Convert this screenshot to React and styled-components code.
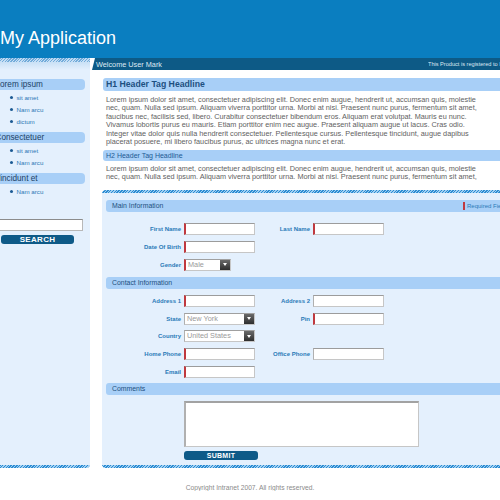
import React from 'react';
import styled, { createGlobalStyle } from 'styled-components';

const GlobalStyle = createGlobalStyle`
  body {
    margin: 0;
    background: #fff;
    overflow: hidden;
    font-family: "Liberation Sans", Arial, sans-serif;
  }
`;

const hatch = `repeating-linear-gradient(135deg, #2a8bd2 0 1px, #a2d0f2 1px 2px)`;

const Page = styled.div`
  width: 512px;
  margin-left: -6px;
`;

const Header = styled.header`
  height: 58px;
  box-sizing: border-box;
  background: #0a7ec0;
  display: flex;
  align-items: flex-end;
  padding: 0 0 11px 6px;
`;

const Title = styled.h1`
  margin: 0;
  font-size: 18px;
  line-height: 18px;
  font-weight: normal;
  color: #fff;
`;

const Body = styled.div`
  display: flex;
  align-items: stretch;
`;

const Sidebar = styled.aside`
  width: 96px;
  display: flex;
  flex-direction: column;
`;

const SideTop = styled.div`
  height: 12px;
  background:
    repeating-linear-gradient(135deg, rgba(30, 120, 190, 0.5) 0 1px, transparent 1px 2px) top / 100% 4px no-repeat,
    linear-gradient(#bcd9f2, #e4f0fd);
`;

const SideBox = styled.div`
  flex: 1;
  display: flex;
  flex-direction: column;
  background: #e4f0fd;
  border-bottom-right-radius: 4px;
  padding-top: 9px;
  overflow: hidden;

  &::after {
    content: '';
    display: block;
    height: 3px;
    margin-top: auto;
    background: ${hatch};
  }
`;

const SideHead = styled.div`
  height: 11px;
  line-height: 11px;
  margin-right: 5px;
  padding-left: 1.5px;
  background: #a8cff7;
  border-radius: 0 4px 4px 0;
  font-size: 8.2px;
  color: #1d3f66;
  white-space: nowrap;
`;

const SideList = styled.ul`
  list-style: none;
  margin: 0 0 5px;
  padding: 1px 0 0;
`;

const SideItem = styled.li`
  display: flex;
  align-items: center;
  height: 12px;
  padding-left: 16px;
  font-size: 6.2px;
  color: #2c77b5;

  &::before {
    content: '';
    width: 3px;
    height: 3px;
    border-radius: 50%;
    background: #1d5a94;
    margin-right: 3.5px;
  }
`;

const SearchInput = styled.input`
  display: block;
  box-sizing: border-box;
  width: 89px;
  height: 12px;
  margin: 17px 0 4px;
  padding: 0;
  background: #fff;
  border: 1px solid #b8b8b8;
  border-top-color: #8c8c8c;
`;

const Button = styled.button`
  display: block;
  box-sizing: border-box;
  width: ${p => p.$w}px;
  height: ${p => p.$h}px;
  margin-left: ${p => p.$ml || 0}px;
  padding: 0;
  border: none;
  border-radius: 3px;
  background: #0e5a88;
  color: #fff;
  font-family: "Liberation Sans", Arial, sans-serif;
  font-weight: bold;
  font-size: ${p => p.$fs}px;
  line-height: ${p => p.$h}px;
  letter-spacing: 0.3px;
`;

const Main = styled.main`
  flex: 1;
  min-width: 0;
  display: flex;
  flex-direction: column;
`;

const TopBar = styled.div`
  height: 12px;
  margin-left: 2px;
  background: #0d5a86;
  clip-path: polygon(3px 0, 100% 0, 100% 100%, 0 100%);
  display: flex;
  align-items: center;
  padding-left: 4px;
  font-size: 7.3px;
  color: #dde9f3;
  white-space: nowrap;
`;

const Registered = styled.span`
  margin-left: auto;
  width: 78px;
  overflow: hidden;
  font-size: 5.6px;
`;

const Content = styled.div`
  flex: 1;
  padding: 8px 0 0 13px;
  display: flex;
  flex-direction: column;
`;

const HeadBar = styled.div`
  height: ${p => p.$h}px;
  line-height: ${p => p.$h}px;
  padding-left: 3px;
  background: #a8cff7;
  border-radius: 3px 0 0 3px;
  font-size: ${p => p.$fs}px;
  font-weight: ${p => (p.$bold ? 'bold' : 'normal')};
  color: ${p => (p.$bold ? '#1d4f80' : '#1d5a94')};
`;

const Para = styled.p`
  margin: ${p => p.$mt}px 0 ${p => p.$mb}px 3px;
  font-size: 7.3px;
  line-height: 8.4px;
  color: #616161;

  span {
    display: block;
    white-space: nowrap;
  }
`;

const Panel = styled.form`
  margin-left: -1px;
  background: #e4f0fd;
  border-radius: 4px 0 0 4px;
  overflow: hidden;
  display: flex;
  flex-direction: column;

  &::before,
  &::after {
    content: '';
    display: block;
    height: 3px;
    background: ${hatch};
  }
`;

const PanelInner = styled.div`
  padding: 7px 0 5px 4px;
`;

const SectionBar = styled.div`
  display: flex;
  align-items: center;
  height: 12px;
  padding-left: 6px;
  margin-bottom: ${p => p.$mb}px;
  background: #a8cff7;
  border-radius: 3px 0 0 3px;
  font-size: 6.9px;
  color: #1d4f80;
  white-space: nowrap;
`;

const Required = styled.span`
  margin-left: auto;
  width: 43px;
  overflow: hidden;
  display: flex;
  align-items: center;
  font-size: 6px;
  color: #2a7ab8;

  &::before {
    content: '';
    flex: none;
    width: 2px;
    height: 8px;
    background: #c0393f;
    margin-right: 2px;
  }
`;

const Grid = styled.div`
  display: grid;
  grid-template-columns: 75px 71px 52px 71px;
  grid-auto-rows: 12px;
  column-gap: 3px;
  row-gap: ${p => p.$gap}px;
  margin-bottom: ${p => p.$mb}px;
`;

const Label = styled.label`
  text-align: right;
  line-height: 12px;
  font-size: 6px;
  font-weight: bold;
  color: #2a7ab8;
  white-space: nowrap;
`;

const Input = styled.input`
  box-sizing: border-box;
  width: 71px;
  height: 12px;
  margin: 0;
  padding: 0;
  background: #fff;
  border: 1px solid #c6c6c6;
  border-top-color: #9c9c9c;
  border-left: ${p => (p.$req ? '2px solid #c0393f' : '1px solid #b0b0b0')};
`;

const Select = styled.div`
  box-sizing: border-box;
  width: ${p => p.$w}px;
  height: 12px;
  display: flex;
  background: #fff;
  border: 1px solid #c6c6c6;
  border-top-color: #a0a0a0;
  border-left: ${p => (p.$req ? '2px solid #c0393f' : '1px solid #b0b0b0')};
  font-size: 7.3px;
  line-height: 10px;
  color: #9a9a9a;
  padding-left: 2px;
`;

const Arrow = styled.span`
  margin-left: auto;
  width: 10px;
  height: 10px;
  background: linear-gradient(#6a6a6a, #2e2e2e);
  display: flex;
  align-items: center;
  justify-content: center;

  &::after {
    content: '';
    border-left: 2.5px solid transparent;
    border-right: 2.5px solid transparent;
    border-top: 3px solid #fff;
  }
`;

const Comments = styled.textarea`
  display: block;
  box-sizing: border-box;
  width: 235px;
  height: 46px;
  margin: 6px 0 4px 78px;
  padding: 0;
  resize: none;
  background: #fff;
  border: 1px solid #c6c6c6;
  border-top: 2px solid #a2a2a2;
  border-left: 2px solid #b0b0b0;
`;

const Footer = styled.footer`
  padding-top: 16px;
  text-align: center;
  font-size: 6.7px;
  color: #8a8a8a;
`;

const para1 = [
  'Lorem ipsum dolor sit amet, consectetuer adipiscing elit. Donec enim augue, hendrerit ut, accumsan quis, molestie',
  'nec, quam. Nulla sed ipsum. Aliquam viverra porttitor urna. Morbi at nisi. Praesent nunc purus, fermentum sit amet,',
  'faucibus nec, facilisis sed, libero. Curabitur consectetuer bibendum eros. Aliquam erat volutpat. Mauris eu nunc.',
  'Vivamus lobortis purus eu mauris. Etiam porttitor enim nec augue. Praesent aliquam augue ut lacus. Cras odio.',
  'Integer vitae dolor quis nulla hendrerit consectetuer. Pellentesque cursus. Pellentesque tincidunt, augue dapibus',
  'placerat posuere, mi libero faucibus purus, ac ultrices magna nunc et erat.',
];

const para2 = [
  'Lorem ipsum dolor sit amet, consectetuer adipiscing elit. Donec enim augue, hendrerit ut, accumsan quis, molestie',
  'nec, quam. Nulla sed ipsum. Aliquam viverra porttitor urna. Morbi at nisi. Praesent nunc purus, fermentum sit amet,',
];

const sideMenu = [
  { title: 'Lorem ipsum', items: ['sit amet', 'Nam arcu', 'dictum'] },
  { title: 'Consectetuer', items: ['sit amet', 'Nam arcu'] },
  { title: 'Tincidunt et', items: ['Nam arcu'] },
];

const mainRows = [
  [{ label: 'First Name', req: true }, { label: 'Last Name', req: true }],
  [{ label: 'Date Of Birth', req: true }],
  [{ label: 'Gender', req: true, select: 'Male', w: 47 }],
];

const contactRows = [
  [{ label: 'Address 1', req: true }, { label: 'Address 2' }],
  [{ label: 'State', select: 'New York', w: 71 }, { label: 'Pin', req: true }],
  [{ label: 'Country', select: 'United States', w: 71 }],
  [{ label: 'Home Phone', req: true }, { label: 'Office Phone' }],
  [{ label: 'Email', req: true }],
];

function Field({ f }) {
  return (
    <>
      <Label>{f.label}</Label>
      {f.select ? (
        <Select $w={f.w} $req={f.req}>
          {f.select}
          <Arrow />
        </Select>
      ) : (
        <Input $req={f.req} />
      )}
    </>
  );
}

function FormRows({ rows, gap, mb }) {
  return (
    <Grid $gap={gap} $mb={mb}>
      {rows.map((row, i) => (
        <React.Fragment key={i}>
          <Field f={row[0]} />
          {row[1] ? <Field f={row[1]} /> : <><span /><span /></>}
        </React.Fragment>
      ))}
    </Grid>
  );
}

export default function App() {
  return (
    <Page>
      <GlobalStyle />
      <Header>
        <Title>My Application</Title>
      </Header>
      <Body>
        <Sidebar>
          <SideTop />
          <SideBox>
            {sideMenu.map(group => (
              <div key={group.title}>
                <SideHead>{group.title}</SideHead>
                <SideList>
                  {group.items.map(item => (
                    <SideItem key={item}>{item}</SideItem>
                  ))}
                </SideList>
              </div>
            ))}
            <SearchInput type="text" />
            <Button type="button" $w={73} $h={9} $fs={8} $ml={7}>SEARCH</Button>
          </SideBox>
        </Sidebar>
        <Main>
          <TopBar>
            <span>Welcome User Mark</span>
            <Registered>This Product is registered to Intranet</Registered>
          </TopBar>
          <Content>
            <HeadBar $h={13} $fs={8.7} $bold>H1 Header Tag Headline</HeadBar>
            <Para $mt={5} $mb={3.6}>
              {para1.map((l, i) => <span key={i}>{l}</span>)}
            </Para>
            <HeadBar $h={11} $fs={7}>H2 Header Tag Headline</HeadBar>
            <Para $mt={4} $mb={8}>
              {para2.map((l, i) => <span key={i}>{l}</span>)}
            </Para>
            <Panel onSubmit={e => e.preventDefault()}>
              <PanelInner>
                <SectionBar $mb={11}>
                  Main Information
                  <Required>Required Fields</Required>
                </SectionBar>
                <FormRows rows={mainRows} gap={6} mb={6} />
                <SectionBar $mb={6}>Contact Information</SectionBar>
                <FormRows rows={contactRows} gap={5.75} mb={5} />
                <SectionBar $mb={0}>Comments</SectionBar>
                <Comments />
                <Button type="submit" $w={74} $h={9} $fs={7} $ml={78}>SUBMIT</Button>
              </PanelInner>
            </Panel>
          </Content>
        </Main>
      </Body>
      <Footer>Copyright Intranet 2007. All rights reserved.</Footer>
    </Page>
  );
}
